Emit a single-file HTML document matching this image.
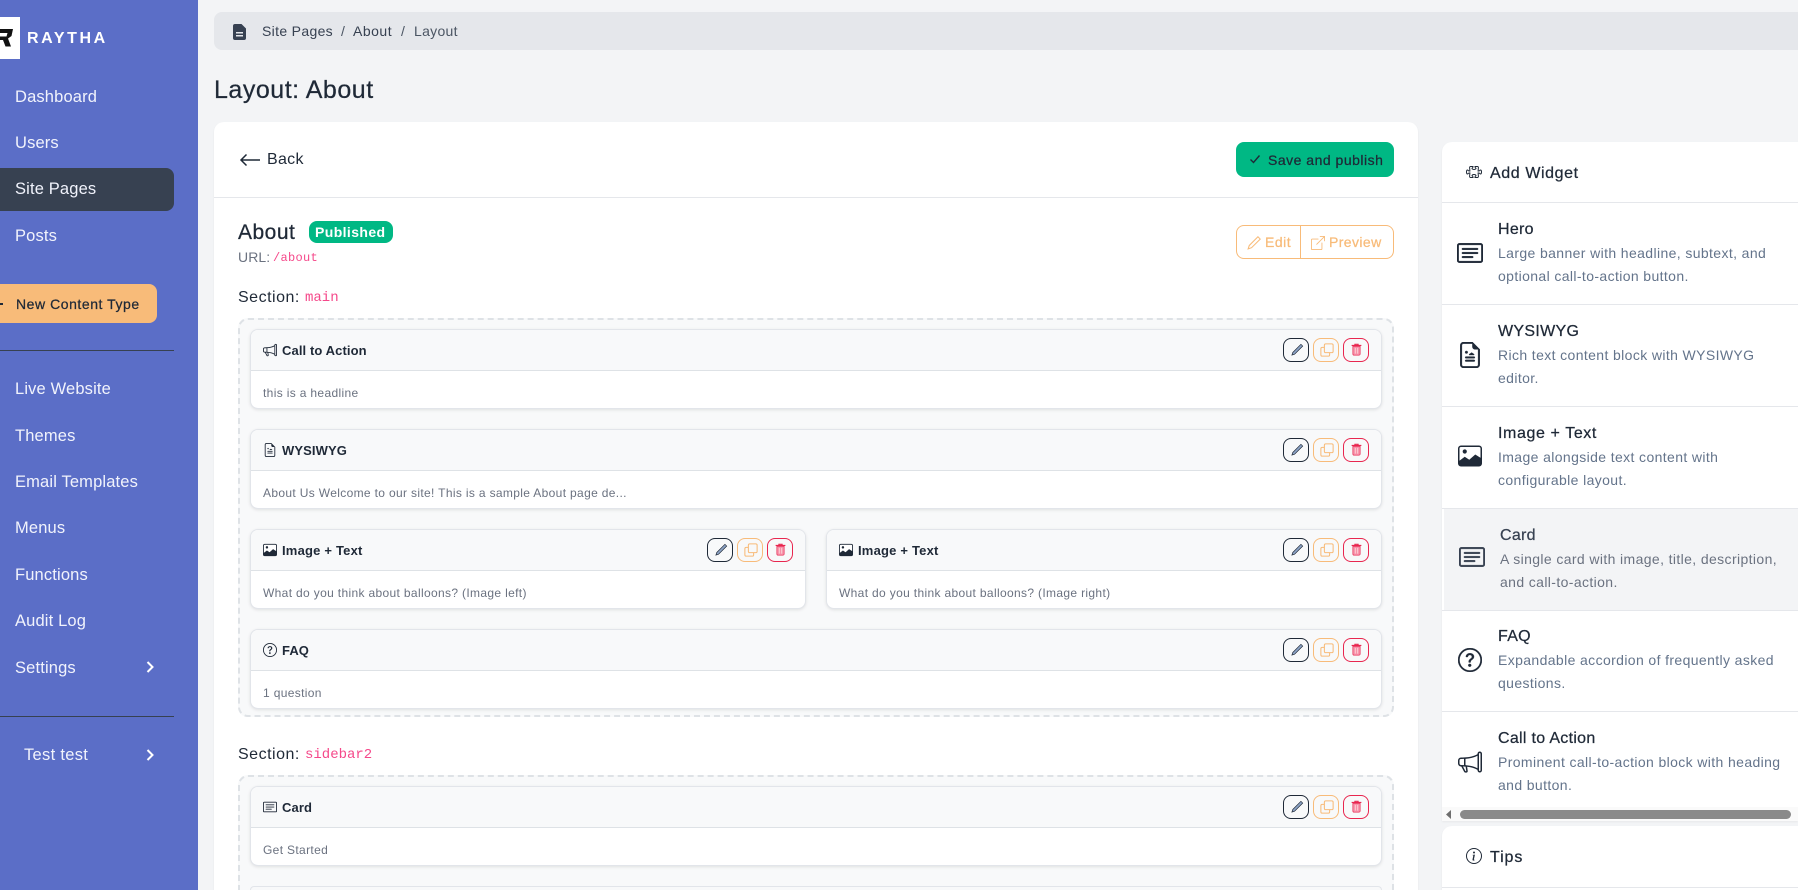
<!DOCTYPE html>
<html lang="en"><head><meta charset="utf-8"><title>Layout: About</title>
<style>
*{box-sizing:border-box}
html,body{margin:0;padding:0;width:1798px;height:890px;overflow:hidden;background:#f3f4f6;font-family:"Liberation Sans",sans-serif;color:#1f2937}
#root{position:relative;width:1798px;height:890px;overflow:hidden}
.t{position:absolute;white-space:nowrap;line-height:20px;height:20px}
.a{position:absolute}
.s{-webkit-text-stroke:.25px currentColor}
svg{display:block;overflow:visible}
#side{position:absolute;left:0;top:0;width:198px;height:890px;background:#5b6ec7;overflow:hidden}
.n{font-size:16.5px;letter-spacing:.15px;color:#f1f3fc;left:15px}
.m{font-family:"Liberation Mono",monospace;color:#f5488a}
.w{position:absolute;background:#fff;border:1px solid #e2e5ea;border-radius:8px;height:80px;box-shadow:0 1px 3px rgba(0,0,0,.1)}
.wh{position:absolute;left:0;right:0;top:0;height:41px;background:#f8f9fa;border-bottom:1px solid #dee2e6;border-radius:7px 7px 0 0}
.wt{font-size:13px;font-weight:bold;left:31px;top:11px;color:#1f2937;letter-spacing:.1px}
.wb{font-size:12px;color:#6b7280;left:12px;top:53px;letter-spacing:.34px}
.wi{left:12px;top:13px}
.b{position:absolute;top:8px;width:26px;height:24px;border:1px solid;border-radius:8px;background:transparent}
.b svg{position:absolute;left:6px;top:4px}
.e{right:72px;border-color:#1f2937}
.c{right:42px;border-color:#f8bb79}
.d{right:12px;border-color:#e8264f}
.z{position:absolute;left:238px;width:1156px;border:2px dashed #dee2e6;border-radius:10px;background:#f8f9fa}
.pt{font-size:16px;color:#1f2937;letter-spacing:.3px;-webkit-text-stroke:.25px currentColor}
.pd{font-size:14px;color:#64748b;letter-spacing:.38px}
.line{position:absolute;left:1442px;width:356px;height:1px;background:#e5e7eb}
.sec{font-size:16px;color:#1f2937;letter-spacing:.5px}
</style></head><body><div id="root">
<svg width="0" height="0" style="position:absolute">
<defs>
<symbol id="pen" viewBox="0 0 16 16"><path fill="#8ea5c8" stroke="#1f2937" stroke-width=".8" d="M12.500 1.500l2 2L5.200 12.800l-3 1 1-3z"/></symbol>
<symbol id="copy" viewBox="0 0 16 16"><rect x="5" y="1" width="10" height="10" rx="1.500" fill="none" stroke="#f8bb79" stroke-width="1.200"/><path d="M5 5H2.500A1.500 1.500 0 0 0 1 6.500V13.500A1.500 1.500 0 0 0 2.500 15H9.500A1.500 1.500 0 0 0 11 13.500V11" fill="none" stroke="#f8bb79" stroke-width="1.200"/></symbol>
<symbol id="trash" viewBox="0 0 16 16"><path fill="#f78fa8" stroke="#e8264f" stroke-width=".8" d="M3.500 4h9v9.500a1.500 1.500 0 0 1-1.500 1.500H5A1.500 1.500 0 0 1 3.500 13.500z"/><path fill="#fdd" d="M6 6h1v7H6zM9 6h1v7H9z"/><path fill="none" stroke="#e8264f" stroke-width="1.300" d="M2 3h12M6 3V1.500h4V3"/></symbol>
<symbol id="card" viewBox="0 0 16 16"><path fill="currentColor" d="M14.500 3a.5.5 0 0 1 .5.5v9a.5.5 0 0 1-.5.5h-13a.5.5 0 0 1-.5-.5v-9a.5.5 0 0 1 .5-.5h13zm-13-1A1.500 1.500 0 0 0 0 3.500v9A1.500 1.500 0 0 0 1.500 14h13a1.500 1.500 0 0 0 1.500-1.500v-9A1.500 1.500 0 0 0 14.500 2h-13z"/><path fill="currentColor" d="M3 5.500a.5.5 0 0 1 .5-.5h9a.5.5 0 0 1 0 1h-9a.5.5 0 0 1-.5-.5zM3 8a.5.5 0 0 1 .5-.5h9a.5.5 0 0 1 0 1h-9A.5.5 0 0 1 3 8zm0 2.500a.5.5 0 0 1 .5-.5h6a.5.5 0 0 1 0 1h-6a.5.5 0 0 1-.5-.5z"/></symbol>
<symbol id="file" viewBox="0 0 16 16"><path fill="currentColor" d="M9.500 0H4a2 2 0 0 0-2 2v12a2 2 0 0 0 2 2h8a2 2 0 0 0 2-2V4.500L9.500 0zm0 1v2A1.500 1.500 0 0 0 11 4.500h2V14a1 1 0 0 1-1 1H4a1 1 0 0 1-1-1V2a1 1 0 0 1 1-1h5.500z"/><path fill="currentColor" d="M5 11.500a.5.5 0 0 1 .5-.5h5a.5.5 0 0 1 0 1h-5a.5.5 0 0 1-.5-.5zm0-2a.5.5 0 0 1 .5-.5h5a.5.5 0 0 1 0 1h-5a.5.5 0 0 1-.5-.5zM7.500 7.500l1.500-1 1.500 1v.5h-3zM5.800 5.500a.8.8 0 1 1 0 1.600.8.8 0 0 1 0-1.600z"/></symbol>
<symbol id="img" viewBox="0 0 16 16"><rect x=".5" y="1.500" width="15" height="13" rx="1.500" fill="#fff" stroke="currentColor"/><path fill="currentColor" d="M.5 11.500l4-3 3 2 4-3.500 4 2.500v3.500a1.500 1.500 0 0 1-1.500 1.500H2a1.500 1.500 0 0 1-1.500-1.500z"/><circle cx="4.500" cy="5" r="1.400" fill="currentColor"/></symbol>
<symbol id="q" viewBox="0 0 16 16"><path fill="currentColor" d="M8 15A7 7 0 1 1 8 1a7 7 0 0 1 0 14zm0 1A8 8 0 1 0 8 0a8 8 0 0 0 0 16z"/><path fill="currentColor" d="M5.255 5.786a.237.237 0 0 0 .241.247h.825c.138 0 .248-.113.266-.25.09-.656.54-1.134 1.342-1.134.686 0 1.314.343 1.314 1.168 0 .635-.374.927-.965 1.371-.673.489-1.206 1.060-1.168 1.987l.003.217a.25.25 0 0 0 .25.246h.811a.25.25 0 0 0 .25-.25v-.105c0-.718.273-.927 1.010-1.486.609-.463 1.244-.977 1.244-2.056 0-1.511-1.276-2.241-2.673-2.241-1.267 0-2.655.59-2.750 2.286zm1.557 5.763c0 .533.425.927 1.010.927.609 0 1.028-.394 1.028-.927 0-.552-.42-.94-1.029-.94-.584 0-1.009.388-1.009.94z"/></symbol>
<symbol id="mega" viewBox="0 0 16 16"><path fill="currentColor" d="M13 2.500a1.500 1.500 0 0 1 3 0v11a1.500 1.500 0 0 1-3 0v-.214c-2.162-1.241-4.490-1.843-6.912-2.083l.405 2.712A1 1 0 0 1 5.510 15.100h-.548a1 1 0 0 1-.916-.599l-1.850-3.490a68.140 68.140 0 0 0-.202-.003A2.014 2.014 0 0 1 0 9V7a2.020 2.020 0 0 1 1.992-2.013 74.663 74.663 0 0 0 2.483-.075c3.043-.154 6.148-.849 8.525-2.199V2.500zm1 0v11a.5.5 0 0 0 1 0v-11a.5.5 0 0 0-1 0zm-1 1.350c-2.344 1.205-5.209 1.842-8 2.033v4.233c.18.01.359.022.537.036 2.568.189 5.093.744 7.463 1.993V3.850zm-9 6.215v-4.130a95.090 95.090 0 0 1-1.992.052A1.020 1.020 0 0 0 1 7v2c0 .55.448 1.002 1.006 1.009A60.490 60.490 0 0 1 4 10.065zm-.657.975 1.609 3.037.01.024h.548l-.002-.014-.443-2.966a68.019 68.019 0 0 0-1.722-.082z"/></symbol>
</defs></svg>

<div id="side">
  <div class="a" style="left:0;top:17px;width:20px;height:42px;background:#fff"></div>
  <svg class="a" style="left:0;top:29px" width="14" height="18" viewBox="0 0 14 18"><path fill="#111" d="M0 0h13l-1.500 7L8 9.500l3 8H5.500L3 11H0V7.500h6.500L7.500 4H0z"/></svg>
  <div class="t" style="left:27px;top:29px;font-size:16px;font-weight:bold;letter-spacing:2.6px;color:#fff">RAYTHA</div>
  <div class="t n" style="top:87px">Dashboard</div>
  <div class="t n" style="top:133px">Users</div>
  <div class="a" style="left:0;top:168px;width:174px;height:43px;background:#374151;border-radius:0 8px 8px 0"></div>
  <div class="t n" style="top:179px">Site Pages</div>
  <div class="t n" style="top:226px">Posts</div>
  <div class="a" style="left:0;top:284px;width:157px;height:39px;background:#f8bb79;border-radius:0 8px 8px 0"></div>
  <div class="a" style="left:0;top:303px;width:3px;height:1.500px;background:#1f2937"></div>
  <div class="t s" style="left:16px;top:294px;font-size:14px;color:#1f2937;letter-spacing:.55px">New Content Type</div>
  <div class="a" style="left:0;top:350px;width:174px;height:1px;background:#374151"></div>
  <div class="t n" style="top:379px">Live Website</div>
  <div class="t n" style="top:426px">Themes</div>
  <div class="t n" style="top:472px">Email Templates</div>
  <div class="t n" style="top:518px">Menus</div>
  <div class="t n" style="top:565px">Functions</div>
  <div class="t n" style="top:611px">Audit Log</div>
  <div class="t n" style="top:658px">Settings</div>
  <svg class="a" style="left:146px;top:660px" width="8" height="14" viewBox="0 0 8 14"><path d="M1.500 2l5 5-5 5" fill="none" stroke="#fff" stroke-width="2"/></svg>
  <div class="a" style="left:0;top:716px;width:174px;height:1px;background:#374151"></div>
  <div class="t n" style="left:24px;top:745px;letter-spacing:.3px">Test test</div>
  <svg class="a" style="left:146px;top:748px" width="8" height="14" viewBox="0 0 8 14"><path d="M1.500 2l5 5-5 5" fill="none" stroke="#fff" stroke-width="2"/></svg>
</div>

<div class="a" style="left:214px;top:12px;width:1584px;height:38px;background:#e5e7eb;border-radius:8px 0 0 8px"></div>
<svg class="a" style="left:233px;top:24px" width="14" height="16" viewBox="0 0 14 16"><path fill="#374151" d="M2 0h6.500L13 4.500V14a2 2 0 0 1-2 2H2a2 2 0 0 1-2-2V2a2 2 0 0 1 2-2z"/><path fill="#e5e7eb" d="M3 8h7v1.500H3zM3 11h7v1.500H3z"/></svg>
<div class="t" style="left:262px;top:21px;font-size:14px;color:#374151;letter-spacing:.33px">Site Pages</div>
<div class="t" style="left:341px;top:21px;font-size:14px;color:#4b5563">/</div>
<div class="t" style="left:353px;top:21px;font-size:14px;color:#374151;letter-spacing:.5px">About</div>
<div class="t" style="left:401px;top:21px;font-size:14px;color:#4b5563">/</div>
<div class="t" style="left:414px;top:21px;font-size:14px;color:#4b5563;letter-spacing:.3px">Layout</div>

<div class="t s" style="left:214px;top:80px;font-size:25px;color:#1f2937;letter-spacing:.52px">Layout: About</div>

<div class="a" style="left:214px;top:122px;width:1204px;height:768px;background:#fff;border-radius:10px 10px 0 0;box-shadow:0 1px 2px rgba(0,0,0,.05)"></div>
<div class="a" style="left:214px;top:197px;width:1204px;height:1px;background:#e5e7eb"></div>
<svg class="a" style="left:239px;top:150px" width="22" height="20" viewBox="0 0 22 20"><path d="M21 10H2M7.500 4.500L2 10l5.500 5.500" fill="none" stroke="#1f2937" stroke-width="1.500"/></svg>
<div class="t" style="left:267px;top:150px;font-size:16px;color:#1f2937;letter-spacing:.3px">Back</div>
<div class="a" style="left:1236px;top:142px;width:158px;height:35px;background:#00b884;border-radius:8px"></div>
<svg class="a" style="left:1249px;top:153px" width="12" height="12" viewBox="0 0 12 12"><path d="M1.500 6.500l3 3 6-7" fill="none" stroke="#1f2937" stroke-width="1.400"/></svg>
<div class="t s" style="left:1268px;top:150px;font-size:14px;color:#1f2937;letter-spacing:.5px">Save and publish</div>

<div class="t s" style="left:238px;top:223px;font-size:21px;color:#1f2937;letter-spacing:.5px">About</div>
<div class="a" style="left:309px;top:221px;width:84px;height:22px;background:#00b884;border-radius:8px"></div>
<div class="t" style="left:315px;top:222px;font-size:14px;font-weight:bold;color:#fff;letter-spacing:.4px">Published</div>
<div class="t" style="left:238px;top:247px;font-size:14px;color:#6b7280;letter-spacing:.1px">URL:</div>
<div class="t m" style="left:273px;top:248px;font-size:12px;letter-spacing:.3px">/about</div>

<div class="a" style="left:1236px;top:225px;width:158px;height:34px;border:1px solid #f8bb79;border-radius:8px;background:#fff"></div>
<div class="a" style="left:1300px;top:225px;width:1px;height:34px;background:#f8bb79"></div>
<svg class="a" style="left:1247px;top:236px" width="14" height="14" viewBox="0 0 16 16"><path fill="none" stroke="#f8bb79" stroke-width="1.200" d="M12.500.9l2.600 2.600L5.200 13.400l-3.900 1.300 1.300-3.900z"/></svg>
<div class="t s" style="left:1265px;top:232px;font-size:14px;color:#f8bb79;letter-spacing:.5px">Edit</div>
<svg class="a" style="left:1311px;top:236px" width="14" height="14" viewBox="0 0 16 16"><path fill="#f8bb79" d="M8.636 3.500a.5.5 0 0 0-.5-.5H1.500A1.500 1.500 0 0 0 0 4.500v10A1.500 1.500 0 0 0 1.500 16h10a1.500 1.500 0 0 0 1.500-1.500V7.864a.5.5 0 0 0-1 0V14.500a.5.5 0 0 1-.5.5h-10a.5.5 0 0 1-.5-.5v-10a.5.5 0 0 1 .5-.5h6.636a.5.5 0 0 0 .5-.5z"/><path fill="#f8bb79" d="M16 .5a.5.5 0 0 0-.5-.5h-5a.5.5 0 0 0 0 1h3.793L6.146 9.146a.5.5 0 1 0 .708.708L15 1.707V5.500a.5.5 0 0 0 1 0v-5z"/></svg>
<div class="t s" style="left:1329px;top:232px;font-size:14px;color:#f8bb79;letter-spacing:.4px">Preview</div>

<div class="t sec" style="left:238px;top:288px">Section:</div>
<div class="t m" style="left:305px;top:288px;font-size:14px">main</div>

<div class="z" style="top:318px;height:399px"></div>

<div class="w" style="left:250px;top:329px;width:1132px"><div class="wh"></div><svg class="a wi" width="14" height="14" style="color:#1f2937"><use href="#mega"/></svg><div class="t wt">Call to Action</div><div class="t wb">this is a headline</div><div class="b e"><svg width="14" height="14"><use href="#pen"/></svg></div><div class="b c"><svg width="14" height="14"><use href="#copy"/></svg></div><div class="b d"><svg width="13" height="13"><use href="#trash"/></svg></div></div>

<div class="w" style="left:250px;top:429px;width:1132px"><div class="wh"></div><svg class="a wi" width="14" height="14" style="color:#1f2937"><use href="#file"/></svg><div class="t wt">WYSIWYG</div><div class="t wb">About Us Welcome to our site! This is a sample About page de...</div><div class="b e"><svg width="14" height="14"><use href="#pen"/></svg></div><div class="b c"><svg width="14" height="14"><use href="#copy"/></svg></div><div class="b d"><svg width="13" height="13"><use href="#trash"/></svg></div></div>

<div class="w" style="left:250px;top:529px;width:556px"><div class="wh"></div><svg class="a wi" width="14" height="14" style="color:#1f2937"><use href="#img"/></svg><div class="t wt" style="letter-spacing:.2px">Image + Text</div><div class="t wb">What do you think about balloons? (Image left)</div><div class="b e"><svg width="14" height="14"><use href="#pen"/></svg></div><div class="b c"><svg width="14" height="14"><use href="#copy"/></svg></div><div class="b d"><svg width="13" height="13"><use href="#trash"/></svg></div></div>

<div class="w" style="left:826px;top:529px;width:556px"><div class="wh"></div><svg class="a wi" width="14" height="14" style="color:#1f2937"><use href="#img"/></svg><div class="t wt" style="letter-spacing:.2px">Image + Text</div><div class="t wb">What do you think about balloons? (Image right)</div><div class="b e"><svg width="14" height="14"><use href="#pen"/></svg></div><div class="b c"><svg width="14" height="14"><use href="#copy"/></svg></div><div class="b d"><svg width="13" height="13"><use href="#trash"/></svg></div></div>

<div class="w" style="left:250px;top:629px;width:1132px"><div class="wh"></div><svg class="a wi" width="14" height="14" style="color:#1f2937"><use href="#q"/></svg><div class="t wt">FAQ</div><div class="t wb">1 question</div><div class="b e"><svg width="14" height="14"><use href="#pen"/></svg></div><div class="b c"><svg width="14" height="14"><use href="#copy"/></svg></div><div class="b d"><svg width="13" height="13"><use href="#trash"/></svg></div></div>

<div class="t sec" style="left:238px;top:745px">Section:</div>
<div class="t m" style="left:305px;top:745px;font-size:14px">sidebar2</div>

<div class="z" style="top:775px;height:115px;border-bottom:0;border-radius:10px 10px 0 0"></div>

<div class="w" style="left:250px;top:786px;width:1132px"><div class="wh"></div><svg class="a wi" width="14" height="14" style="color:#1f2937"><use href="#card"/></svg><div class="t wt">Card</div><div class="t wb">Get Started</div><div class="b e"><svg width="14" height="14"><use href="#pen"/></svg></div><div class="b c"><svg width="14" height="14"><use href="#copy"/></svg></div><div class="b d"><svg width="13" height="13"><use href="#trash"/></svg></div></div>

<div class="a" style="left:250px;top:886px;width:1132px;height:4px;background:#f8f9fa;border:1px solid #e2e5ea;border-bottom:0;border-radius:8px 8px 0 0"></div>

<!-- Right panel -->
<div class="a" style="left:1442px;top:142px;width:356px;height:679px;background:#fff;border-radius:10px 0 0 0;box-shadow:0 1px 2px rgba(0,0,0,.05)"></div>
<svg class="a" style="left:1466px;top:164px;color:#1f2937" width="16" height="16" viewBox="0 0 16 16"><path fill="none" stroke="currentColor" stroke-width="1" d="M3.600 3.600A1 1 0 0 1 4.600 2.500H7v.4c0 .5-.4.900-.8 1.200-.3.200-.2.600 0 .8.400.4 1.100.6 1.800.6s1.400-.2 1.800-.6c.2-.2.300-.6 0-.8C9.400 3.800 9 3.400 9 2.900v-.4h2.400a1 1 0 0 1 1 1.100L12.100 7h.8c.4 0 .8-.3 1-.6.200-.3.400-.4.600-.4.600 0 1 1 1 2s-.4 2-1 2c-.2 0-.4-.1-.6-.4-.2-.3-.6-.6-1-.6h-.8l.3 3.400a1 1 0 0 1-1 1.100H9v-.4c0-.5.400-.9.800-1.200.3-.2.200-.6 0-.8-.4-.4-1.100-.6-1.800-.6s-1.400.2-1.800.6c-.2.200-.3.600 0 .8.400.3.800.7.800 1.200v.4H4.600a1 1 0 0 1-1-1.100L3.900 9h-.8c-.4 0-.8.3-1 .6-.2.300-.4.400-.6.400-.6 0-1-1-1-2s.4-2 1-2c.2 0 .4.100.6.400.2.300.6.600 1 .6h.8z"/></svg>
<div class="t s" style="left:1490px;top:164px;font-size:16px;color:#1f2937;letter-spacing:.6px">Add Widget</div>
<div class="line" style="top:202px"></div>

<svg class="a" style="left:1457px;top:240px;color:#1f2937" width="26" height="26" viewBox="0 0 16 16"><use href="#card" stroke="#1f2937" stroke-width=".25"/></svg>
<div class="t pt" style="left:1498px;top:220px">Hero</div>
<div class="t pd" style="left:1498px;top:243px">Large banner with headline, subtext, and</div>
<div class="t pd" style="left:1498px;top:266px">optional call-to-action button.</div>
<div class="line" style="top:304px"></div>

<svg class="a" style="left:1457px;top:342px;color:#1f2937" width="26" height="26" viewBox="0 0 16 16"><use href="#file" stroke="#1f2937" stroke-width=".25"/></svg>
<div class="t pt" style="left:1498px;top:322px">WYSIWYG</div>
<div class="t pd" style="left:1498px;top:345px">Rich text content block with WYSIWYG</div>
<div class="t pd" style="left:1498px;top:368px">editor.</div>
<div class="line" style="top:406px"></div>

<svg class="a" style="left:1458px;top:444px;color:#1f2937" width="24" height="24" viewBox="0 0 16 16"><use href="#img"/></svg>
<div class="t pt" style="left:1498px;top:424px;letter-spacing:.6px">Image + Text</div>
<div class="t pd" style="left:1498px;top:447px">Image alongside text content with</div>
<div class="t pd" style="left:1498px;top:470px">configurable layout.</div>

<div class="a" style="left:1444px;top:508px;width:354px;height:102px;background:#f3f4f6"></div>
<div class="line" style="top:508px"></div>
<svg class="a" style="left:1459px;top:544px;color:#374151" width="26" height="26" viewBox="0 0 16 16"><use href="#card" stroke="#374151" stroke-width=".25"/></svg>
<div class="t pt" style="left:1500px;top:526px;color:#374151">Card</div>
<div class="t pd" style="left:1500px;top:549px;color:#6b7280">A single card with image, title, description,</div>
<div class="t pd" style="left:1500px;top:572px;color:#6b7280">and call-to-action.</div>
<div class="line" style="top:610px"></div>

<svg class="a" style="left:1458px;top:648px;color:#1f2937" width="24" height="24" viewBox="0 0 16 16"><use href="#q" stroke="#1f2937" stroke-width=".2"/></svg>
<div class="t pt" style="left:1498px;top:627px">FAQ</div>
<div class="t pd" style="left:1498px;top:650px">Expandable accordion of frequently asked</div>
<div class="t pd" style="left:1498px;top:673px">questions.</div>
<div class="line" style="top:711px"></div>

<svg class="a" style="left:1458px;top:750px;color:#1f2937" width="24" height="24" viewBox="0 0 16 16"><use href="#mega"/></svg>
<div class="t pt" style="left:1498px;top:729px">Call to Action</div>
<div class="t pd" style="left:1498px;top:752px">Prominent call-to-action block with heading</div>
<div class="t pd" style="left:1498px;top:775px">and button.</div>

<div class="a" style="left:1442px;top:807px;width:356px;height:14px;background:#fafafa"></div>
<svg class="a" style="left:1446px;top:810px" width="6" height="9" viewBox="0 0 6 9"><path d="M5 0v9L0 4.500z" fill="#6e6e6e"/></svg>
<div class="a" style="left:1460px;top:810px;width:331px;height:9px;background:#8a8a8a;border-radius:5px"></div>

<div class="a" style="left:1442px;top:826px;width:356px;height:64px;background:#fff;border-radius:10px 0 0 0;box-shadow:0 1px 2px rgba(0,0,0,.05)"></div>
<svg class="a" style="left:1466px;top:848px;color:#1f2937" width="16" height="16" viewBox="0 0 16 16"><path fill="currentColor" d="M8 15A7 7 0 1 1 8 1a7 7 0 0 1 0 14zm0 1A8 8 0 1 0 8 0a8 8 0 0 0 0 16z"/><path fill="currentColor" d="m8.930 6.588-2.290.287-.082.38.45.083c.294.07.352.176.288.469l-.738 3.468c-.194.897.105 1.319.808 1.319.545 0 1.178-.252 1.465-.598l.088-.416c-.2.176-.492.246-.686.246-.275 0-.375-.193-.304-.533L8.930 6.588zM9 4.500a1 1 0 1 1-2 0 1 1 0 0 1 2 0z"/></svg>
<div class="t s" style="left:1490px;top:848px;font-size:16px;color:#1f2937;letter-spacing:.9px">Tips</div>
<div class="line" style="top:887px"></div>
</div></body></html>
